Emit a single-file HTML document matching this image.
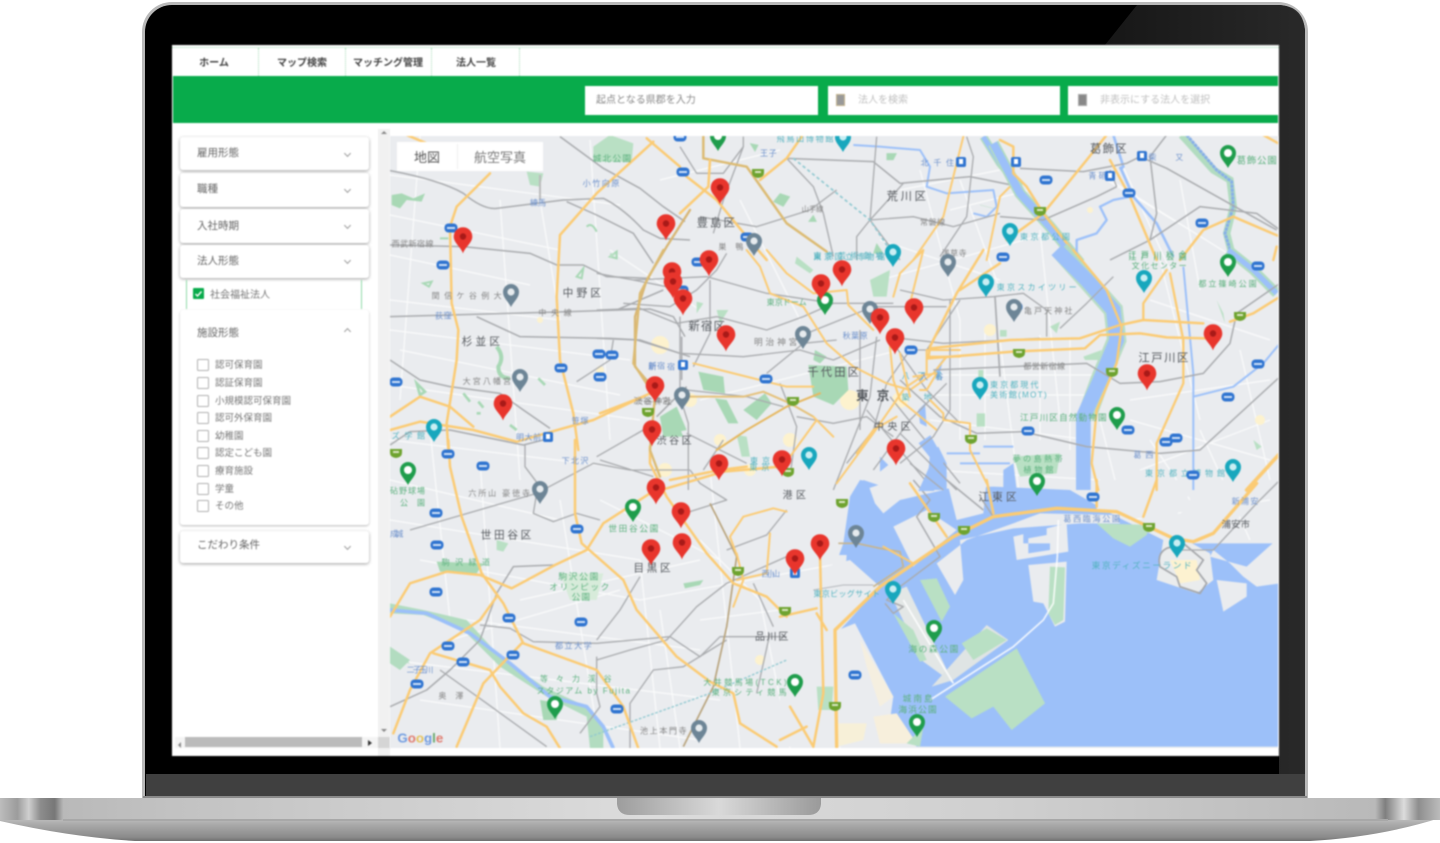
<!DOCTYPE html>
<html lang="ja"><head><meta charset="utf-8"><title>Map</title>
<style>
html,body{margin:0;padding:0;width:1440px;height:843px;overflow:hidden;background:#fff}
body{position:relative;font-family:"Liberation Sans","Noto Sans CJK JP",sans-serif}
.a{position:absolute}
#lid{left:142px;top:2px;width:1166px;height:796px;border-radius:30px 30px 0 0;background:#000;border:3px solid #b9b9b9;border-bottom:0;box-sizing:border-box;overflow:hidden}
#scr{left:172px;top:45px;width:1107px;height:711px;background:#fff;overflow:hidden;filter:blur(.75px)}
.card{position:absolute;left:8px;width:189px;background:#fff;border-radius:3px;box-shadow:0 1px 3px rgba(0,0,0,.38)}
.t{position:absolute;color:#666;font-size:10.5px;white-space:nowrap}
.chev{position:absolute;left:165px;width:4px;height:4px;border-right:1.2px solid #999;border-bottom:1.2px solid #999;transform:rotate(45deg)}
.cb{position:absolute;left:25px;width:10px;height:10px;border:1.3px solid #b0b0b0;border-radius:1.5px}
.cl{position:absolute;left:43px;color:#777;font-size:9.5px;white-space:nowrap}
.nav{position:absolute;top:9px;font-size:10px;font-weight:700;color:#444;white-space:nowrap;transform:translateX(-50%)}
.div{position:absolute;top:3px;height:28px;border-left:1px dotted #a5dcb8}
.inp{position:absolute;top:41px;height:29px;background:#fff}
svg text{font-family:"Liberation Sans","Noto Sans CJK JP",sans-serif}
</style></head><body>

<div id="lid" class="a"></div>
<svg class="a" style="left:142px;top:2px" width="1166" height="796">
<defs><linearGradient id="gl" x1="0" y1="0" x2="1" y2="0"><stop offset="0" stop-color="#181818"/><stop offset="1" stop-color="#2b2b2b"/></linearGradient></defs>
<path d="M995 3 L1135 3 Q1163 3 1163 32 L1163 796 L1137 796 L1137 43 L963 43Z" fill="url(#gl)" opacity=".95"/>
<rect x="4" y="772" width="1159" height="23" fill="#404040"/>
</svg>

<div id="scr" class="a">
  <div class="a" style="left:0;top:2px;width:1107px;border-top:1px dotted #9ed8b2"></div>
  <div class="div" style="left:86px"></div><div class="div" style="left:173px"></div><div class="div" style="left:259px"></div><div class="div" style="left:347px"></div>
  <div class="nav" style="left:42px">ホーム</div>
  <div class="nav" style="left:130px">マップ検索</div>
  <div class="nav" style="left:216px">マッチング管理</div>
  <div class="nav" style="left:304px">法人一覧</div>
  <div class="a" style="left:1px;top:31px;width:1105px;height:47px;background:#08ab4b"></div>
  <div class="inp" style="left:413px;width:233px"><span class="a" style="left:11px;top:5px;font-size:10px;color:#888;white-space:nowrap">起点となる県郡を入力</span></div>
  <div class="inp" style="left:656px;width:232px"><span class="a" style="left:8px;top:8px;width:9px;height:12px;background:#999;border:1px solid #c4b48c;box-sizing:border-box"></span><span class="a" style="left:30px;top:5px;font-size:10px;color:#c0c0c0;white-space:nowrap">法人を検索</span></div>
  <div class="inp" style="left:896px;width:210px"><span class="a" style="left:10px;top:8px;width:9px;height:12px;background:#888;border:1px solid #aaa;box-sizing:border-box"></span><span class="a" style="left:32px;top:5px;font-size:10px;color:#c0c0c0;white-space:nowrap">非表示にする法人を選択</span></div>

  <div class="card" style="top:92px;height:33px"><span class="t" style="left:17px;top:8px">雇用形態</span><i class="chev" style="top:14px"></i></div>
  <div class="card" style="top:128px;height:34px"><span class="t" style="left:17px;top:8px">職種</span><i class="chev" style="top:14px"></i></div>
  <div class="card" style="top:164px;height:34px"><span class="t" style="left:17px;top:9px">入社時期</span><i class="chev" style="top:14px"></i></div>
  <div class="card" style="top:200px;height:33px"><span class="t" style="left:17px;top:8px">法人形態</span><i class="chev" style="top:13px"></i></div>
  <div class="a" style="left:14px;top:235px;width:176px;height:29px;border-left:1.5px solid #8fd9a8;border-right:1.5px solid #8fd9a8;box-sizing:border-box"></div>
  <div class="a" style="left:21px;top:243px;width:11px;height:11px;background:#08ab4b;border-radius:1px"></div>
  <svg class="a" style="left:21px;top:243px" width="11" height="11"><path d="M2.5 6 L4.5 8 L8.5 3.5" stroke="#fff" stroke-width="1.4" fill="none"/></svg>
  <span class="cl" style="left:38px;top:241px;font-size:10px">社会福祉法人</span>
  <div class="card" style="top:265px;height:215px;box-shadow:0 1px 2px rgba(0,0,0,.28)">
    <span class="t" style="left:17px;top:15px">施設形態</span>
    <i class="chev" style="top:19px;transform:rotate(225deg)"></i>
    <i class="cb" style="left:17px;top:49px"></i><span class="cl" style="left:35px;top:47px">認可保育園</span>
    <i class="cb" style="left:17px;top:67px"></i><span class="cl" style="left:35px;top:65px">認証保育園</span>
    <i class="cb" style="left:17px;top:85px"></i><span class="cl" style="left:35px;top:83px">小規模認可保育園</span>
    <i class="cb" style="left:17px;top:102px"></i><span class="cl" style="left:35px;top:100px">認可外保育園</span>
    <i class="cb" style="left:17px;top:120px"></i><span class="cl" style="left:35px;top:118px">幼稚園</span>
    <i class="cb" style="left:17px;top:137px"></i><span class="cl" style="left:35px;top:135px">認定こども園</span>
    <i class="cb" style="left:17px;top:155px"></i><span class="cl" style="left:35px;top:153px">療育施設</span>
    <i class="cb" style="left:17px;top:173px"></i><span class="cl" style="left:35px;top:171px">学童</span>
    <i class="cb" style="left:17px;top:190px"></i><span class="cl" style="left:35px;top:188px">その他</span>
  </div>
  <div class="card" style="top:486px;height:32px"><span class="t" style="left:17px;top:6px">こだわり条件</span><i class="chev" style="top:13px"></i></div>

  <div class="a" style="left:206px;top:84px;width:12px;height:652px;background:#f1f1f1"></div>
  <div class="a" style="left:3px;top:692px;width:203px;height:11px;background:#f4f4f4"></div>
  <div class="a" style="left:13px;top:692px;width:177px;height:10px;background:#bbb"></div>
  <div class="a" style="left:206px;top:692px;width:12px;height:11px;background:#d5d5d5"></div>
  <svg class="a" style="left:0;top:0" width="1107" height="711">
    <path d="M209 89l3-3 3 3zM209 684l3 3 3-3z" fill="#888"/>
    <path d="M9 697l-3 3 3 3z" fill="#888"/><path d="M196 695l4 3-4 3z" fill="#333"/>
  </svg>
</div>

<svg class="a" style="left:0;top:0;filter:blur(.8px)" width="1440" height="843" viewBox="0 0 1440 843">
<defs>
<clipPath id="mc"><rect x="390" y="136" width="888" height="612"/></clipPath>
<g id="pin"><path d="M0 9.5 C-2 3 -9.3 -1 -9.3 -7.5 A9.3 9.3 0 1 1 9.3 -7.5 C9.3 -1 2 3 0 9.5Z" fill="#e8352c"/><circle cy="-7.5" r="3.2" fill="#a81a18"/></g>
<g id="gp"><path d="M0 12 C-3 6 -8 3 -8 -3 A8 8 0 1 1 8 -3 C8 3 3 6 0 12Z" fill="#1f9d4c"/><circle cy="-3" r="4" fill="#fff"/></g>
<g id="tp"><path d="M0 12 C-3 6 -8 3 -8 -3 A8 8 0 1 1 8 -3 C8 3 3 6 0 12Z" fill="#18a7bd"/><circle cy="-3" r="3.6" fill="#c9eef3"/></g>
<g id="sp"><path d="M0 12 C-3 6 -8 3 -8 -3 A8 8 0 1 1 8 -3 C8 3 3 6 0 12Z" fill="#6d8596"/><circle cy="-3" r="3.6" fill="#e6ebee"/></g>
<g id="bs"><rect x="-6.5" y="-4.5" width="13" height="9" rx="4" fill="#2f74d0"/><rect x="-4" y="-1" width="8" height="2" fill="#cfe0f7"/></g>
<g id="hs"><path d="M-6-4 H6 V0 Q6 4 0 5 Q-6 4-6 0Z" fill="#6ea32f"/><rect x="-3" y="-2" width="6" height="2" fill="#dbe8c4"/></g>
<g id="st"><rect x="-5" y="-5" width="10" height="10" rx="2" fill="#2f74d0"/><rect x="-2" y="-3" width="4" height="5" fill="#fff"/></g>
</defs>
<style>
.o{fill:none;stroke:#fbcb74;stroke-width:7.5;stroke-linejoin:round;stroke-linecap:round}
.g{fill:none;stroke:#a9abae;stroke-width:4.5;stroke-linejoin:round}
.w{fill:none;stroke:#fff;stroke-width:4;opacity:.85}
.r{fill:none;stroke:#9cc0f9;stroke-width:7;stroke-linejoin:round}
.l{fill:#55595e;font-size:13px}
.lb{fill:#6c90cb;font-size:9px}
.lg{fill:#5bb07d;font-size:9px}
.lt{fill:#52b2bf;font-size:9px}
.lk{fill:#858585;font-size:9px}
.y{fill:#fdf2ce}
.p{fill:#b9e0c4}
</style>
<g clip-path="url(#mc)">
<rect x="390" y="136" width="888" height="612" fill="#eaecef"/>

<!-- minor white street mesh -->
<g stroke="#fff" stroke-width="1.2" opacity=".8" fill="none">
<path d="M390 175L620 205M390 215L560 250M390 300L560 320M390 330L630 360M390 385L640 420M390 440L640 470M390 520L640 560M390 610L700 650M390 660L720 700M700 400L900 350M640 600L860 560M660 180L780 150M900 190L1000 170M880 280L1060 230M930 420L1090 440M930 470L1100 480M1130 420L1270 460M1130 520L1270 500M1110 180L1270 280"/>
<path d="M420 136L400 400M500 200L520 480M590 140L610 440M480 460L500 748M560 500L600 748M640 560L660 748M710 470L740 748M760 600L790 748M740 200L800 320M920 170L960 320M1040 230L1060 420M1160 260L1200 420M1120 160L1170 270M1200 430L1250 540M1000 340L1020 500"/>
<path d="M960 320V440M985 330V440M1040 335V440M1070 340V450M930 375H1100M930 395H1100M1150 440L1190 500M700 540L760 600M610 250L700 310"/>
<path d="M390 255L530 285M400 350L620 395M390 480L560 520M420 560L640 600M420 700L700 740M600 500L720 560M520 600L700 560M450 640L620 590M700 620L860 600M1150 300L1270 340M1140 470L1270 420M1130 400L1270 380M1090 170L1190 230M950 210L1030 190M880 240L1000 280"/>
<path d="M430 430L450 620M540 200L560 320M660 610L680 748M820 600L840 748M1100 420L1120 500M1180 180L1200 290M1240 350L1270 480M960 180L1000 290"/>
</g>
<!-- yellow built up patches -->
<g class="y"><circle cx="660" cy="345" r="9"/><circle cx="690" cy="400" r="7"/><circle cx="850" cy="400" r="10"/><circle cx="900" cy="400" r="8"/><circle cx="790" cy="440" r="7"/><circle cx="720" cy="440" r="6"/><circle cx="665" cy="470" r="7"/><circle cx="750" cy="470" r="6"/><circle cx="600" cy="370" r="4"/><circle cx="540" cy="320" r="3"/><circle cx="990" cy="330" r="6"/><circle cx="760" cy="660" r="5"/><circle cx="790" cy="700" r="6"/><circle cx="1090" cy="210" r="3"/><circle cx="1260" cy="420" r="5"/></g>

<!-- Bay -->
<g transform="translate(780 480) scale(.33333)">
<path d="M210 50 L240 0 L410 30 L640 20 L870 30 L1010 110 L1170 190 L1500 190 L1500 800 L410 800 L330 720 L340 650 L220 500 L170 440 L150 300 L190 190Z" fill="#9cc0f9"/>
<!-- land islands -->
<path d="M260 0 L470 0 L490 30 L360 60 L310 100 L285 70Z" fill="#eaecef"/>
<path d="M500 0 L620 0 L610 100 L530 120Z" fill="#eaecef"/>
<path d="M340 140 L440 90 L530 150 L400 260 Z" fill="#eaecef"/>
<path d="M470 250 L560 180 L700 130 L780 100 L1010 105 L1020 130 L900 130 L700 145 L540 180 L550 300 L525 345 Z" fill="#eaecef"/>
<path d="M700 170 L860 130 L865 215 L710 240Z" fill="#eaecef"/>
<path d="M730 150 L800 140 L800 165 L745 175 L745 220 L810 210 L810 190 L730 190Z" fill="#9cc0f9"/>
<path d="M745 255 L860 245 L855 425 L825 440 L790 370 L760 365Z" fill="#eaecef"/>
<path d="M810 260 L855 262 L850 420 L825 435 L805 400Z" fill="#b9e0c4"/>
<path d="M950 130 L1110 135 L1100 165 L1050 200 L1000 175Z" fill="#b9e0c4"/>
<path d="M1150 180 L1200 170 L1290 220 L1300 300 L1250 340 L1190 320 L1130 300Z" fill="#eaeced"/>
<path d="M1170 240 L1250 240 L1260 300 L1200 310Z" fill="#fdf2d0"/>
<path d="M1290 230 L1400 260 L1500 170 L1500 310 L1430 320 L1390 290 L1350 250 L1300 210Z" fill="#eaecef"/>
<path d="M1310 300 L1400 310 L1400 350 L1330 395Z" fill="#eaecef"/>
<path d="M1150 180 L1300 180 L1500 0 L1250 0 L1230 60Z" fill="#eaecef"/>
<path d="M1040 0 L1240 0 L1220 60 L1160 150 L1100 120 L1040 100Z" fill="#eaecef"/>
<path d="M950 0 L1040 0 L1040 100 L950 90Z" fill="#eaecef"/>
<path d="M420 300 L470 295 L510 380 L485 425 Z" fill="#b9e0c4"/>
<path d="M330 340 L380 320 L520 610 L430 545Z" fill="#e3e7e6"/>
<path d="M340 400 L400 450 L440 540 L420 545Z" fill="#b9e0c4"/>
<path d="M455 620 L620 435 L685 480 L520 600Z" fill="#dfe4e4"/>
<path d="M545 490 L620 445 L680 480 L580 540Z" fill="#b9e0c4"/>
<path d="M495 650 L710 505 L795 670 L695 750 L640 680 L575 715Z" fill="#b9e0c4"/>
<path d="M210 240 L300 320 L180 450 L165 800 L0 800 L0 300Z" fill="#eaecef"/>
<path d="M175 450 L225 430 L340 650 L320 720 L410 800 L170 800Z" fill="#eaecef"/>
<path d="M240 480 L340 650 L300 680 L260 560Z" fill="#f5efe0"/>
<path d="M170 730 L260 730 L250 780 L170 800Z" fill="#f7f0d8"/>
<path d="M280 710 L350 700 L410 790 L300 790Z" fill="#f7efdc"/>
<path d="M380 790 L430 740 L420 800 Z" fill="#b9e0c4"/>
<path d="M110 620 L160 620 L155 690 L115 690Z" fill="#b9e0c4"/>
<path d="M160 225 L200 225 L190 360 L150 360Z" fill="#eaecef"/>
<path d="M1140 260 Q1130 220 1160 205 L1210 190 L1270 240 L1250 270 L1280 310 L1260 340 L1200 320 L1190 290Z" stroke="#a4a6a9" stroke-width="5" fill="none"/>
<!-- white bridge -->
<path d="M450 660 L700 500 L790 420 L820 370 L832 230 L835 120" class="w" style="stroke-width:5"/>
<path d="M370 360 L520 610" class="w" style="stroke-width:5"/>
<!-- rails -->
<path d="M400 0 L450 60 L410 110 L480 230 L360 320 L320 360 L370 380 L340 400 L315 370" class="g"/>
<path d="M280 320 L370 260 L360 215 L300 205 L230 190 L175 190" class="g" style="stroke:#c7b48d;stroke-width:5"/>
<path d="M100 330 L190 315 L280 315" class="g" style="stroke:#b4b7bb;stroke-width:3"/>
<path d="M500 0 L610 90 M600 50 L640 110" class="g"/>
<path d="M1200 210 L1300 210 L1430 70 L1500 0" class="g" style="stroke-width:4"/>
<!-- expressway -->
<path d="M170 800 L165 450 L300 320 L520 170 L640 110 L830 85 L1010 95 L1180 175 L1240 185 L1300 160 L1430 10" class="o" style="stroke-width:10"/>
<path d="M390 10 L500 170 M620 0 L640 100 M950 0 L950 80 M1130 0 L1090 110 M120 220 L130 640 L100 800" class="o"/>
<path d="M0 410 L110 385 M110 400 L140 450 M30 680 L100 800 M0 780 L80 740" class="o"/>
<path d="M310 200 L400 250" class="o" style="stroke-width:6"/>
<text x="100" y="350" class="lt" style="font-size:24px" textLength="200">東京ビッグサイト</text>
<text x="935" y="265" class="lt" style="font-size:26px" textLength="300">東京ディズニーランド</text>
<text x="850" y="125" class="lb" style="font-size:24px" textLength="170">葛西臨海公園</text>
<text x="385" y="516" class="lg" style="font-size:26px" textLength="150">海の森公園</text>
<text x="368" y="665" class="lg" style="font-size:26px" textLength="90">城南島</text>
<text x="355" y="698" class="lg" style="font-size:26px" textLength="115">海浜公園</text>
<text x="595" y="62" class="l" style="font-size:32px" textLength="115">江東区</text>
<text x="1325" y="143" class="l" style="font-size:28px" textLength="85">浦安市</text>
<text x="1355" y="72" class="lb" style="font-size:24px" textLength="80">新浦安</text>
<text x="8" y="55" class="l" style="font-size:30px" textLength="70">港区</text>
</g>

<!-- west side crop7 -->
<g transform="translate(390 130) scale(.33333)">
<path d="M610 50 L660 15 L730 40 L725 95 L610 95Z" fill="#b9e0c4"/>
<path d="M410 125 L460 130 L450 170 L420 165Z" fill="#b9e0c4"/>
<path d="M5 195 L35 190 L70 205 L105 190 L95 215 L50 210 L30 235 L5 225Z" fill="#a8d8b5"/>
<path d="M590 290 q15-15 30 15M660 380 l20-15v20zM560 440 l20-25-5 30zM100 460 l25-5-8 15zM150 325 h25" stroke="#a8d8b5" stroke-width="6" fill="none"/>
<path d="M320 650 Q345 680 325 710 Q325 745 360 745" stroke="#a8d8b5" stroke-width="12" fill="none"/>
<path d="M80 760 l25 25-15 10zM220 790 l20 25M265 815 l15 18M445 745 l20 20M360 885 l20 15M260 850 h12" stroke="#a8d8b5" stroke-width="8" fill="none"/>
<path d="M810 860 L860 830 L890 900 L820 915Z" fill="#a8d8b5"/>
<path d="M0 122 Q150 150 220 190 Q280 240 320 235 L520 210 L640 205 Q700 235 760 300 L810 325 L900 330" class="g"/>
<path d="M510 20 L640 115 L750 175 L820 230 L885 275" class="g"/>
<path d="M530 215 L620 255 L730 310 L790 400" class="g"/>
<path d="M0 345 L220 350 L420 370 L500 405 L580 405 L650 440 L780 445" class="g"/>
<path d="M0 560 L180 555 L540 545 L780 537 L850 560 L885 620" class="g"/>
<path d="M260 560 L390 620 L660 625 L750 630 L900 680" class="g"/>
<path d="M0 690 L90 750 L180 770 L330 790 L400 840 L480 895" class="g"/>
<path d="M0 945 L60 905 L180 900 L400 945 L480 925" class="g"/>
<path d="M560 755 L660 690 L670 630" class="g" style="stroke-width:4"/>
<path d="M680 540 L820 480" class="g"/>
<path d="M875 620 V750 M890 770 L800 860" class="g"/>
<path d="M450 135 V210" class="g" style="stroke-width:6;stroke:#bbb"/>
<path d="M50 15 L110 40 M300 130 L200 230 L180 290 L185 520 L205 600 L200 690 L170 880 L175 960" class="o"/>
<path d="M770 25 L870 110" class="o"/>
<path d="M790 35 L620 190 L510 315 L500 500 L510 690 L550 850 L565 960" class="o"/>
<path d="M900 240 L830 350 L770 450 L735 560 L735 710 L795 780" class="o" style="stroke:#d8b674;stroke-width:7"/>
<path d="M0 860 L90 800 L180 830 L250 890 M0 900 L90 875 L250 900 L380 935 L520 895 L610 870 L780 790" class="o"/>
<text x="518" y="500" class="l" style="font-size:32px" textLength="115">中野区</text>
<text x="215" y="645" class="l" style="font-size:32px" textLength="115">杉並区</text>
<text x="125" y="505" class="lk" style="font-size:24px" textLength="210">関信ケ谷例大</text>
<text x="218" y="762" class="lk" style="font-size:24px" textLength="145">大宮八幡宮</text>
<text x="5" y="350" class="lk" style="font-size:24px" textLength="125">西武新宿線</text>
<text x="445" y="556" class="lk" style="font-size:24px" textLength="100">中央線</text>
<text x="420" y="226" class="lb" style="font-size:24px" textLength="48">練馬</text>
<text x="578" y="168" class="lb" style="font-size:24px" textLength="110">小竹向原</text>
<text x="135" y="565" class="lb" style="font-size:24px" textLength="50">荻窪</text>
<text x="545" y="880" class="lb" style="font-size:24px" textLength="50">笹塚</text>
<text x="378" y="930" class="lb" style="font-size:24px" textLength="75">明大前</text>
<text x="775" y="716" class="lb" style="font-size:24px" textLength="50">新宿</text>
<text x="730" y="820" class="lk" style="font-size:24px" textLength="110">渋谷神宮</text>
<text x="608" y="95" class="lg" style="font-size:26px" textLength="115">城北公園</text>
<text x="5" y="925" class="lt" style="font-size:24px" textLength="100">ズ学館</text>
</g>

<!-- SW crop8 -->
<g transform="translate(390 440) scale(.33333)">
<path d="M140 365 L280 370 L260 400 L150 395Z" fill="#a8d8b5"/>
<path d="M320 300 L355 310 L340 335 L320 330Z" fill="#b9e0c4"/>
<path d="M510 400 L640 400 L620 480 L540 480Z" fill="#d7ebda"/>
<path d="M880 430 L940 420 L930 435 L885 445Z" fill="#a8d8b5"/>
<path d="M450 780 L510 790 L500 840 L460 840Z" fill="#a8d8b5"/>
<path d="M0 490 L100 510 L230 540 L330 650 L460 740 L590 800 L640 860 L640 925 L600 925 L590 830 L470 770 L330 680 L220 570 L100 525 L0 520Z" fill="#b2dcc0"/>
<path d="M0 510 L110 520 L240 580 L360 670 L480 770 L590 800 L640 860 L670 925" class="r" style="stroke-width:11"/>
<path d="M0 625 L60 670 L5 660Z M0 620 L60 660 L30 690 L0 670Z" fill="#b2dcc0"/>
<path d="M0 800 L110 750 L180 690 L270 600 L320 460 L370 380 L490 375" class="g"/>
<path d="M60 270 L440 160 L430 220 L490 245 L560 220 L630 240" class="g" style="stroke-width:4"/>
<path d="M440 160 L610 70 L720 90 L900 90" class="g" style="stroke-width:4"/>
<path d="M405 15 V80 L450 140" class="g" style="stroke-width:4"/>
<path d="M270 555 L360 565 L430 605 L620 610 L840 590 L930 650 L990 590 L1190 590" class="g" style="stroke-width:4"/>
<path d="M620 650 V760 L630 800 L570 880 M620 660 L720 630 L830 600 L920 500 L1010 430 L1190 350" class="g" style="stroke-width:4"/>
<path d="M620 600 L690 510 L750 410" class="g" style="stroke-width:4"/>
<path d="M720 925 V790 L790 690 L880 680 L1010 600" class="g" style="stroke-width:4"/>
<path d="M150 690 L290 790 L470 920" class="g" style="stroke-width:4"/>
<path d="M1010 330 L1130 285 L1190 210 M900 215 L1010 180 L930 130 L900 90 M1000 0 L940 90" class="g" style="stroke-width:4"/>
<path d="M960 190 L1040 350 L1010 560 L970 740 L880 920" class="g" style="stroke-width:5;stroke:#b8a37c"/>
<path d="M1090 430 L1150 560 M1140 580 L1100 760" class="g" style="stroke-width:4"/>
<path d="M600 890 L960 760 L1190 660" stroke="#8fc8d0" stroke-width="4" stroke-dasharray="8 5" fill="none"/>
<path d="M175 0 L180 80 L215 230 L275 400 L340 490 L400 610 L620 690 L700 800 L745 925" class="o"/>
<path d="M555 0 V220 L575 310 L700 420 L740 510 L860 650 L960 725 L1030 760 L1050 850 L1160 920" class="o"/>
<path d="M0 530 L60 430 L170 395 L270 405 L365 445 L495 375 L590 330 L640 250 L780 160 L1000 95 L1170 80" class="o"/>
<path d="M320 470 L270 540 L120 640 L60 750 L10 880" class="o"/>
<path d="M130 640 L300 690 L330 740 L400 820 L470 860 L510 925" class="o"/>
<path d="M395 610 L280 730 L200 920" class="o"/>
<path d="M780 20 V70 L830 170 L950 340 L1030 430 L1130 470 L1190 530" class="o"/>
<path d="M1040 345 L1020 290 L1060 230 L1150 205 L1190 215 M1040 340 L1060 420 L1030 500" class="o" style="stroke-width:6"/>
<path d="M1140 280 L1130 400 L1040 420" class="o" style="stroke-width:6"/>
<text x="272" y="295" class="l" style="font-size:32px" textLength="152">世田谷区</text>
<text x="730" y="395" class="l" style="font-size:32px" textLength="112">目黒区</text>
<text x="1095" y="600" class="l" style="font-size:30px" textLength="100">品川区</text>
<text x="145" y="775" class="lk" style="font-size:24px" textLength="75">奥澤</text>
<text x="0" y="160" class="lg" style="font-size:24px" textLength="105">砧野球場</text>
<text x="30" y="197" class="lg" style="font-size:24px" textLength="75">公園</text>
<text x="655" y="275" class="lg" style="font-size:26px" textLength="150">世田谷公園</text>
<text x="155" y="375" class="lg" style="font-size:24px" textLength="145">駒沢緑道</text>
<text x="505" y="418" class="lg" style="font-size:26px" textLength="120">駒沢公園</text>
<text x="478" y="450" class="lg" style="font-size:26px" textLength="180">オリンピック</text>
<text x="545" y="480" class="lg" style="font-size:26px" textLength="55">公園</text>
<text x="450" y="725" class="lg" style="font-size:24px" textLength="215">等々力渓谷</text>
<text x="440" y="760" class="lg" style="font-size:24px" textLength="280">スタジアム by Fujita</text>
<text x="495" y="625" class="lb" style="font-size:24px" textLength="110">都立大学</text>
<text x="50" y="697" class="lb" style="font-size:24px" textLength="80">二子玉川</text>
<text x="515" y="70" class="lb" style="font-size:24px" textLength="80">下北沢</text>
<text x="0" y="290" class="lb" style="font-size:24px" textLength="40">成城</text>
<text x="235" y="168" class="lk" style="font-size:24px" textLength="185">六所山 豪徳寺</text>
<text x="940" y="735" class="lg" style="font-size:24px" textLength="250">大井競馬場(TCK)</text>
<text x="965" y="765" class="lg" style="font-size:24px" textLength="225">東京シティ競馬</text>
<text x="750" y="880" class="lk" style="font-size:24px" textLength="140">池上本門寺</text>
<text x="1115" y="410" class="lb" style="font-size:24px" textLength="55">西小山</text>
<text x="1078" y="90" class="lt" style="font-size:24px" textLength="60">東京</text>
<text x="22" y="908" style="font-size:40px;font-weight:700" fill="#6f9be0">G<tspan fill="#e07b6e">o</tspan><tspan fill="#e6c25a">o</tspan><tspan fill="#6f9be0">g</tspan><tspan fill="#67a86b">l</tspan><tspan fill="#e07b6e">e</tspan></text>
</g>

<!-- central crop6 -->
<g transform="translate(600 250) scale(.33333)">
<path d="M625 345 L740 350 L745 420 L700 465 L640 440Z" fill="#a8d8b5"/>
<path d="M295 365 L370 380 L375 430 L310 420Z" fill="#a8d8b5"/>
<path d="M345 445 L380 450 L415 520 L385 520Z" fill="#a8d8b5"/>
<path d="M430 480 L495 430 L515 460 L470 510Z" fill="#a8d8b5"/>
<path d="M180 500 L225 500 L250 560 L190 560Z" fill="#a8d8b5"/>
<path d="M410 555 L440 560 L450 620 L425 620Z" fill="#b9e0c4"/>
<path d="M645 300 L680 320 L660 340 L640 330Z" fill="#a8d8b5"/>
<path d="M590 20 L640 60 L630 70 L585 40Z M810 90 L870 60 L860 140 L820 140Z" fill="#b9e0c4"/>
<path d="M290 155 L310 160 L290 190Z M350 180 L385 180 L360 220Z M30 10 L50 10 L30 25Z" fill="#b9e0c4"/>
<path d="M990 610 L1015 590 L1040 640 L1040 720 L1000 720 L985 670Z M840 620 L865 645 L840 665Z M790 690 L835 705 L790 720Z M955 480 L975 460 L980 530 L960 520Z M1005 360 L1030 325 L1015 390Z" fill="#9cc0f9"/>
<path d="M-10 70 L100 90 L320 80 L500 130 L700 160 L880 160 M100 90 L200 110 M330 90 V250 L280 350" class="g" style="stroke-width:4"/>
<path d="M70 160 L210 170 L290 120 L350 60 L380 10" class="g" style="stroke-width:4"/>
<path d="M-10 180 L120 175 L230 220 L350 200 L500 240 L610 200 L700 160" class="g" style="stroke-width:4"/>
<path d="M-10 265 L110 270 L240 310 L430 320 L600 300 L700 330 L840 270" class="g" style="stroke-width:4"/>
<path d="M240 200 V440 L265 520 V720 M260 420 L440 440 L550 470" class="g" style="stroke-width:4"/>
<path d="M500 370 L610 280 L710 270 M540 400 L590 530 L570 680 M590 500 L700 520 L800 500 L880 560" class="g" style="stroke-width:4"/>
<path d="M-10 620 L130 540 M0 630 L160 680 M260 550 L440 640" class="g" style="stroke-width:4"/>
<path d="M620 250 L820 170 L1040 170 M780 240 V540 M830 260 L810 440 L700 720 M880 280 L980 420 L1080 520" class="g" style="stroke-width:4"/>
<path d="M1080 150 L980 300 L930 300 L860 400 L820 540 L740 640" class="g" style="stroke-width:4"/>
<path d="M870 440 L1080 700 M800 480 L1000 720 M1040 400 L930 510 L820 660" class="g" style="stroke-width:4"/>
<path d="M190 0 L120 130 L100 340 L165 440 L150 600 L180 680" class="o" style="stroke:#dcbb73;stroke-width:7"/>
<path d="M0 490 L130 440 M210 690 L360 660 L440 650" class="o"/>
<path d="M280 340 L420 375 L560 410 L640 410 M500 0 L560 70 L640 130 L740 120 L745 165 L820 240" class="o" style="stroke-width:6"/>
<path d="M440 0 L480 50 L510 130 L610 170 L680 280 L760 350 L860 400 L930 420 L1000 370 L1040 320" class="o" style="stroke-width:6"/>
<path d="M350 600 L440 540 L560 470 L660 430" class="o" style="stroke-width:6;stroke:#e6b861"/>
<path d="M270 440 L430 440 L490 425 L570 460 L640 500" class="o" style="stroke-width:6;stroke:#e5c17a"/>
<path d="M930 160 L970 0 M880 140 L900 70 L970 0 M700 560 L640 500 M570 620 L650 510" class="o" style="stroke-width:6"/>
<path d="M870 290 L880 390 L900 450 L1010 540 M710 700 L820 550 L910 420" class="o" style="stroke-width:6"/>
<path d="M770 610 L820 540 L890 500 M1080 300 H980 V370 L920 410 M1080 320 H990" class="o" style="stroke-width:6"/>
<text x="265" y="240" class="l" style="font-size:34px" textLength="110">新宿区</text>
<text x="622" y="378" class="l" style="font-size:34px" textLength="155">千代田区</text>
<text x="768" y="450" class="l" style="font-size:38px;font-weight:700" textLength="100">東京</text>
<text x="822" y="540" class="l" style="font-size:30px" textLength="110">中央区</text>
<text x="170" y="582" class="l" style="font-size:30px" textLength="105">渋谷区</text>
<text x="462" y="285" class="lk" style="font-size:26px" textLength="130">明治神宮</text>
<text x="105" y="462" class="lk" style="font-size:24px" textLength="110">渋谷神社</text>
<text x="640" y="28" class="lt" style="font-size:24px" textLength="215">東京国立博物館</text>
<text x="500" y="165" class="lg" style="font-size:24px" textLength="120">東京ドーム</text>
<text x="728" y="265" class="lb" style="font-size:24px" textLength="75">秋葉原</text>
<text x="145" y="358" class="lb" style="font-size:24px" textLength="80">新宿</text>
<text x="450" y="640" class="lt" style="font-size:24px" textLength="60">東京</text>
<text x="905" y="385" class="lt" style="font-size:24px" textLength="120">八丁堀</text>
<text x="905" y="450" class="lt" style="font-size:24px" textLength="90">築地</text>
</g>

<!-- north crop10 -->
<g transform="translate(680 130) scale(.33333)">
<path d="M520 45 L600 50 L720 60 L750 110 L740 170 L800 190 L940 180 L950 230 L920 260 L880 250" class="r" style="stroke-width:6"/>
<path d="M620 70 L650 70 L640 90 L620 90Z M300 190 L330 200 L310 230 L280 215Z M210 40 L235 45 L225 65Z M900 225 L940 235 M590 340 L610 370 L580 370Z M400 255 L410 275 L385 275Z" fill="#a8d8b5" stroke="#a8d8b5"/>
<path d="M320 85 L580 95 L660 160 L870 140 L1020 170" class="g"/>
<path d="M0 50 L50 130 L130 130 L190 50 V20 M190 50 L130 210 L100 310 M60 260 L230 290 L390 240 L470 180" class="g" style="stroke-width:4"/>
<path d="M320 85 L400 170 L430 250 L460 380" class="g" style="stroke-width:4"/>
<path d="M590 20 L570 270 L530 320 L530 390 M570 270 L670 160 M570 270 L700 260 L820 290 L960 250 M570 270 L660 390" class="g" style="stroke-width:4"/>
<path d="M340 85 L570 270 L650 390" stroke="#8fc8d0" stroke-width="5" stroke-dasharray="10 8" fill="none"/>
<path d="M860 20 L880 80 L860 260 L780 380" class="g" style="stroke-width:4"/>
<path d="M70 20 V85 L200 110 L320 280 L440 365" class="o" style="stroke:#dcbb73"/>
<path d="M0 250 L85 170 L90 90 M20 140 L110 210 L200 320 L260 390" class="o"/>
<path d="M240 150 L320 85 L365 20" class="o"/>
<path d="M850 20 L790 260 L700 390" class="o" style="stroke-width:6"/>
<path d="M920 390 L960 200 L1010 150" class="o" style="stroke-width:6"/>
<path d="M1020 170 L960 100 L910 20" stroke="#b2dcc0" stroke-width="24" fill="none"/>
<path d="M1020 170 L960 100 L910 20" stroke="#9cc0f9" stroke-width="15" fill="none"/>
<text x="620" y="210" class="l" style="font-size:34px" textLength="118">荒川区</text>
<text x="50" y="290" class="l" style="font-size:34px" textLength="115">豊島区</text>
<text x="240" y="78" class="lb" style="font-size:24px" textLength="50">王子</text>
<text x="722" y="106" class="lb" style="font-size:24px" textLength="100">北千住</text>
<text x="365" y="245" class="lk" style="font-size:22px" textLength="65">山手線</text>
<text x="720" y="285" class="lk" style="font-size:24px" textLength="75">常磐線</text>
<text x="785" y="378" class="lk" style="font-size:24px" textLength="75">浅草寺</text>
<text x="290" y="35" class="lt" style="font-size:24px" textLength="170">飛鳥山博物館</text>
<text x="115" y="358" class="lk" style="font-size:24px" textLength="75">巣鴨</text>
<text x="400" y="385" class="lt" style="font-size:24px" textLength="210">東京芸術劇場</text>
</g>

<!-- NE crop4 -->
<g transform="translate(1000 0) scale(.33333)">
<path d="M545 405 L640 510 L690 540 L700 620 L680 700 L700 780" stroke="#b2dcc0" stroke-width="22" fill="none"/>
<path d="M560 405 L650 510 L695 545 L700 620 L675 700 L700 780" stroke="#86aee8" stroke-width="9" fill="none" stroke-dasharray="10 2"/>
<path d="M-20 430 L60 580 L150 680 L240 790" stroke="#b2dcc0" stroke-width="34" fill="none"/>
<path d="M-20 430 L60 580 L150 680 L240 790" stroke="#9cc0f9" stroke-width="24" fill="none"/>
<path d="M340 405 L370 500 L360 510 M360 500 L400 590 L470 670 L520 770" stroke="#9cc0f9" stroke-width="8" fill="none"/>
<path d="M230 780 L230 720 L290 700 L320 660 L300 620 L340 600 L390 590" class="r"/>
<path d="M60 505 L250 515 L380 490 L420 470 L500 505 L830 690" class="g"/>
<path d="M500 405 L450 470 L470 640 L450 720 L330 780 M0 650 L130 660 L290 590 L350 560" class="g"/>
<path d="M450 720 L600 620 L770 640 L840 690" class="g"/>
<path d="M350 560 L330 510" class="g" style="stroke-width:4"/>
<path d="M320 405 L260 480 L130 640 L20 720 M330 480 L390 590 L470 780" class="o"/>
<path d="M0 420 L40 440 V520 L80 560 L130 640 L240 780" class="o"/>
<path d="M790 405 L835 430 M540 780 L610 690 L700 650 L840 710 M820 780 L830 740" class="o"/>
<text x="270" y="458" class="l" style="font-size:34px" textLength="110">葛飾区</text>
<text x="265" y="535" class="lb" style="font-size:24px" textLength="55">青砥</text>
<text x="445" y="480" class="lb" style="font-size:24px" textLength="105">柴又</text>
<text x="710" y="490" class="lg" style="font-size:28px" textLength="120">葛飾公園</text>
<text x="60" y="718" class="lt" style="font-size:24px" textLength="150">東京都公園</text>
<text x="385" y="778" class="lg" style="font-size:24px" textLength="175">江戸川公園</text>
</g>

<!-- east crop9 -->
<g transform="translate(900 250) scale(.33333)">
<path d="M480 0 L560 90 L640 180 L650 270 L600 390 L560 500" stroke="#b2dcc0" stroke-width="58" fill="none" opacity=".9"/>
<path d="M470 0 L560 90 L640 180 L650 270 L600 390 L550 500 L550 720" stroke="#9cc0f9" stroke-width="44" fill="none"/>
<path d="M850 50 L880 370 L880 720 M880 440 L1000 410 L1090 340 L1140 280" class="r" style="stroke-width:6"/>
<path d="M985 0 L1060 60 L1130 130" stroke="#b2dcc0" stroke-width="30" fill="none"/>
<path d="M985 0 L1060 60 L1130 130" stroke="#9cc0f9" stroke-width="16" fill="none"/>
<path d="M100 630 L60 580 L90 560 L130 630 L100 720 L60 720Z M250 590 H340 M180 640 H330 M140 610 H240" fill="#9cc0f9" stroke="#9cc0f9" stroke-width="6"/>
<path d="M310 720 V660 L340 640 L350 720Z" fill="#9cc0f9"/>
<path d="M550 320 L605 300 L595 330 L555 330Z M235 360 H250 V430 H235Z M230 490 H255 V530 H230Z M300 240 H320 V260 H300Z M340 620 L480 610 L470 670 L360 680Z M450 230 L480 215 L470 250 Z M1060 570 L1085 590 L1070 600Z M950 150 L970 190 L975 220" fill="#b9e0c4"/>
<path d="M0 120 L130 150 L280 140 L370 130 L440 180 V260 M0 265 L130 280 L420 265 M480 235 L560 160 L640 80 M150 150 V480 L100 560 L0 640" class="g" style="stroke-width:4"/>
<path d="M285 140 L300 380" class="g" style="stroke-width:5"/>
<path d="M100 360 L560 340 L660 400 L780 395 L910 370 L990 280 L1010 190 L1140 100" class="g"/>
<path d="M0 390 L120 500 L230 550 L370 545 L560 590 L780 610 L900 600 L1140 380" class="g"/>
<path d="M0 550 L170 720 M30 640 L130 720" class="g" style="stroke-width:4"/>
<path d="M250 0 L170 130 L90 290 L85 325 M300 40 L180 120" class="o"/>
<path d="M90 295 L330 270 L540 265 L660 225 L730 210 L910 220 M85 325 L340 305 L555 295 L600 255 L720 250 L800 262 L920 265" class="o"/>
<path d="M990 215 L1060 190 L1140 140" class="o"/>
<path d="M520 0 L620 120 L665 230 L650 340 L590 480 L575 640 L595 720" class="o" style="stroke-width:7"/>
<path d="M800 60 L730 160 V210 M810 70 L850 270 L850 400 L770 580 L770 720" class="o" style="stroke-width:7"/>
<path d="M0 310 L30 440 M90 450 L130 490 L130 510 L210 520 L210 600 L260 700" class="o" style="stroke-width:6"/>
<path d="M1140 610 L1040 720" class="o" style="stroke-width:11"/>
<path d="M40 380 L110 370 L80 420 L60 420" class="o" style="stroke-width:6"/>
<text x="715" y="335" class="l" style="font-size:34px" textLength="150">江戸川区</text>
<text x="290" y="120" class="lt" style="font-size:24px" textLength="240">東京スカイツリー</text>
<text x="372" y="190" class="lk" style="font-size:24px" textLength="145">亀戸天神社</text>
<text x="270" y="412" class="lt" style="font-size:24px" textLength="145">東京都現代</text>
<text x="270" y="442" class="lt" style="font-size:24px" textLength="170">美術館(MOT)</text>
<text x="360" y="512" class="lg" style="font-size:26px" textLength="260">江戸川区自然動物園</text>
<text x="338" y="635" class="lg" style="font-size:24px" textLength="150">夢の島熱帯</text>
<text x="370" y="668" class="lg" style="font-size:24px" textLength="90">植物館</text>
<text x="895" y="110" class="lg" style="font-size:24px" textLength="175">都立篠崎公園</text>
<text x="685" y="22" class="lg" style="font-size:24px" textLength="175">江戸川総合</text>
<text x="695" y="55" class="lg" style="font-size:24px" textLength="165">文化センター</text>
<text x="700" y="622" class="lb" style="font-size:24px" textLength="60">葛西</text>
<text x="735" y="678" class="lt" style="font-size:24px" textLength="240">東京都立博物館</text>
<text x="370" y="357" class="lk" style="font-size:24px" textLength="125">都営新宿線</text>
<text x="60" y="388" class="lb" style="font-size:24px" textLength="70">入谷</text>
</g>

<!-- Highway & bus shields, POIs -->
<use href="#bs" x="451" y="228"/><use href="#bs" x="443" y="265"/><use href="#bs" x="680" y="137"/><use href="#bs" x="683" y="172"/><use href="#bs" x="612" y="355"/>
<use href="#bs" x="561" y="368"/><use href="#bs" x="599" y="354"/><use href="#bs" x="600" y="377"/><use href="#bs" x="396" y="382"/><use href="#bs" x="448" y="454"/><use href="#bs" x="483" y="466"/>
<use href="#bs" x="577" y="529"/><use href="#bs" x="436" y="592"/><use href="#bs" x="436" y="513"/><use href="#bs" x="437" y="545"/><use href="#bs" x="509" y="618"/><use href="#bs" x="581" y="622"/><use href="#bs" x="448" y="646"/><use href="#bs" x="463" y="662"/><use href="#bs" x="417" y="684"/>
<use href="#bs" x="513" y="655"/><use href="#bs" x="617" y="709"/><use href="#bs" x="855" y="675"/><use href="#bs" x="1016" y="307"/><use href="#bs" x="1128" y="430"/><use href="#bs" x="1176" y="438"/><use href="#bs" x="1228" y="397"/><use href="#bs" x="1258" y="364"/><use href="#bs" x="1258" y="266"/><use href="#bs" x="1046" y="180"/><use href="#bs" x="1129" y="193"/><use href="#bs" x="1028" y="431"/><use href="#bs" x="1093" y="497"/><use href="#bs" x="1166" y="442"/>
<use href="#bs" x="747" y="237"/><use href="#bs" x="698" y="262"/><use href="#bs" x="682" y="290"/><use href="#bs" x="766" y="379"/><use href="#bs" x="911" y="350"/><use href="#bs" x="1003" y="257"/><use href="#bs" x="1202" y="223"/><use href="#bs" x="1193" y="475"/>
<use href="#hs" x="758" y="173"/><use href="#hs" x="1040" y="211"/><use href="#hs" x="1019" y="353"/><use href="#hs" x="1112" y="372"/><use href="#hs" x="1240" y="316"/><use href="#hs" x="971" y="439"/><use href="#hs" x="793" y="401"/><use href="#hs" x="788" y="472"/><use href="#hs" x="648" y="412"/><use href="#hs" x="738" y="571"/><use href="#hs" x="785" y="611"/><use href="#hs" x="842" y="503"/><use href="#hs" x="934" y="517"/><use href="#hs" x="964" y="530"/><use href="#hs" x="1149" y="527"/><use href="#hs" x="835" y="706"/><use href="#hs" x="396" y="453"/>
<use href="#gp" x="718" y="139"/><use href="#gp" x="1228" y="156"/><use href="#gp" x="1228" y="265"/><use href="#gp" x="1117" y="418"/><use href="#gp" x="1037" y="484"/><use href="#gp" x="934" y="631"/><use href="#gp" x="917" y="725"/><use href="#gp" x="795" y="685"/><use href="#gp" x="555" y="707"/><use href="#gp" x="633" y="510"/><use href="#gp" x="408" y="473"/><use href="#gp" x="825" y="303"/>
<use href="#tp" x="1010" y="234"/><use href="#tp" x="986" y="285"/><use href="#tp" x="1144" y="281"/><use href="#tp" x="980" y="388"/><use href="#tp" x="1233" y="470"/><use href="#tp" x="1177" y="546"/><use href="#tp" x="893" y="592"/><use href="#tp" x="809" y="458"/><use href="#tp" x="434" y="430"/><use href="#tp" x="893" y="255"/><use href="#tp" x="843" y="140"/>
<use href="#sp" x="948" y="265"/><use href="#sp" x="1014" y="310"/><use href="#sp" x="511" y="295"/><use href="#sp" x="520" y="380"/><use href="#sp" x="682" y="398"/><use href="#sp" x="540" y="492"/><use href="#sp" x="803" y="337"/><use href="#sp" x="754" y="244"/><use href="#sp" x="870" y="312"/><use href="#sp" x="856" y="536"/><use href="#sp" x="699" y="731"/>
<use href="#st" x="683" y="365"/><use href="#st" x="548" y="437"/><use href="#st" x="795" y="573"/><use href="#st" x="1016" y="162"/><use href="#st" x="961" y="162"/><use href="#st" x="1110" y="176"/><use href="#st" x="1142" y="156"/>

<!-- Tabs -->
<rect x="397" y="142" width="146" height="29" fill="#fff"/>
<rect x="457" y="144" width="1" height="25" fill="#eee"/>
<text x="414" y="162" style="font-size:13px" fill="#555">地図</text>
<text x="474" y="162" style="font-size:13px" fill="#777">航空写真</text>

<!-- Red pins -->
<use href="#pin" x="720" y="195"/><use href="#pin" x="666" y="231"/><use href="#pin" x="463" y="244"/><use href="#pin" x="709" y="267"/><use href="#pin" x="672" y="279"/><use href="#pin" x="673" y="289"/><use href="#pin" x="683" y="306"/><use href="#pin" x="821" y="291"/><use href="#pin" x="842" y="277"/><use href="#pin" x="914" y="315"/><use href="#pin" x="880" y="325"/><use href="#pin" x="895" y="345"/><use href="#pin" x="726" y="342"/><use href="#pin" x="1213" y="341"/><use href="#pin" x="1147" y="381"/><use href="#pin" x="655" y="393"/><use href="#pin" x="503" y="411"/><use href="#pin" x="652" y="437"/><use href="#pin" x="896" y="456"/><use href="#pin" x="719" y="471"/><use href="#pin" x="782" y="467"/><use href="#pin" x="656" y="495"/><use href="#pin" x="681" y="519"/><use href="#pin" x="651" y="556"/><use href="#pin" x="682" y="550"/><use href="#pin" x="820" y="551"/><use href="#pin" x="795" y="566"/>
</g>
</svg>

<!-- Base -->
<svg class="a" style="left:0;top:796px" width="1440" height="47" viewBox="0 0 1440 47">
<defs>
<linearGradient id="b1" x1="0" x2="1" y1="0" y2="0"><stop offset="0" stop-color="#bdbdbd"/><stop offset=".012" stop-color="#9c9c9c"/><stop offset=".02" stop-color="#cfcfcf"/><stop offset=".028" stop-color="#8d8d8d"/><stop offset=".038" stop-color="#777"/><stop offset=".044" stop-color="#b9b9b9"/><stop offset=".12" stop-color="#c2c2c2"/><stop offset=".45" stop-color="#dcdcdc"/><stop offset=".7" stop-color="#cfcfcf"/><stop offset=".955" stop-color="#b9b9b9"/><stop offset=".962" stop-color="#7f7f7f"/><stop offset=".975" stop-color="#dcdcdc"/><stop offset=".985" stop-color="#8e8e8e"/><stop offset="1" stop-color="#bbb"/></linearGradient>
<linearGradient id="b2" x1="0" x2="0" y1="0" y2="1"><stop offset="0" stop-color="#c5c5c5"/><stop offset=".35" stop-color="#a9a9a9"/><stop offset=".85" stop-color="#8a8a8a"/><stop offset="1" stop-color="#6f6f6f"/></linearGradient>
<linearGradient id="b3" x1="0" x2="1" y1="0" y2="0"><stop offset="0" stop-color="#9d9d9d"/><stop offset=".5" stop-color="#d9d9d9"/><stop offset="1" stop-color="#9a9a9a"/></linearGradient>
</defs>
<path d="M0 25 Q70 41 135 45 H1310 Q1380 41 1440 22 V20 H0Z" fill="url(#b2)"/>
<rect x="0" y="2" width="1440" height="22" fill="url(#b1)"/>
<rect x="63" y="23" width="1325" height="2" fill="#a8a8a8"/>
<path d="M617 1 H821 V8 Q820 19 808 19 H630 Q618 19 617 8Z" fill="url(#b3)"/>
<rect x="143" y="0" width="1164" height="2" fill="#8a8a8a"/>
</svg>
</body></html>
